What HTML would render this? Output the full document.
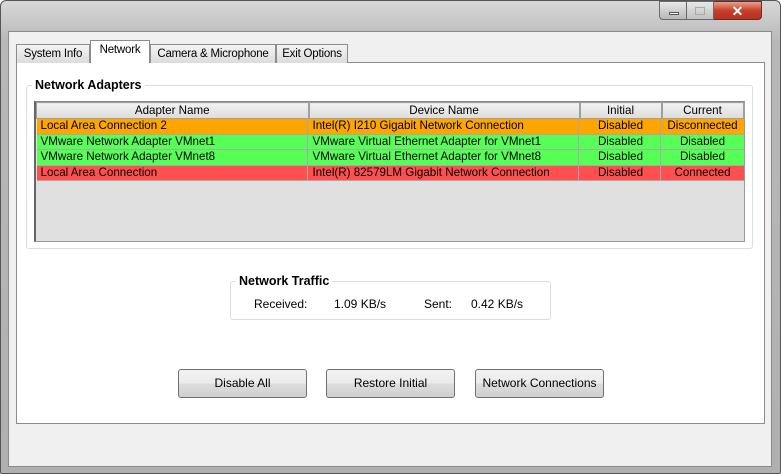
<!DOCTYPE html>
<html><head><style>
*{margin:0;padding:0;box-sizing:border-box}
body{width:781px;height:474px;overflow:hidden;background:#fff;font-family:"Liberation Sans",sans-serif;font-size:12px;color:#000;position:relative}
.abs{position:absolute}
.frame{left:0;top:0;width:781px;height:474px;background:linear-gradient(#d8d8d8,#b8b8b8 40px,#b0b0b0);border:1px solid #555;border-radius:6px 6px 2px 2px}
.client{left:8px;top:31px;width:764px;height:436px;background:#f0f0f0;border:1px solid #8a8a8a}
.tab{top:42px;height:21px;border:1px solid #8c8c8c;border-bottom:none;background:linear-gradient(#f4f4f4,#dcdcdc);padding:3px 0 0 0;text-align:center;font-size:11.5px;letter-spacing:-0.2px}
.page{left:16px;top:62px;width:749px;height:362px;background:#fff;border:1px solid #8c8c8c}
.grp{border:1px solid #d5dfe5;border-radius:3px}
.lbl{background:#fff;font-weight:bold;font-size:12.5px;padding:0 3px}
table{border-collapse:collapse;position:absolute;left:36px;top:102px;font-size:11.6px;table-layout:fixed;width:707px}
td{height:15.5px;padding:0 4px;line-height:14px;white-space:nowrap;overflow:hidden}
th{height:16px;font-weight:normal;background:linear-gradient(#f2f2f2,#dcdcdc);border:1px solid #a0a0a0;border-right:2px solid #a0a0a0;line-height:14px}
.btn{top:369px;width:129px;height:29px;border:1px solid #707070;border-radius:3px;background:linear-gradient(#f2f2f2 0,#ebebeb 50%,#dddddd 51%,#cfcfcf);text-align:center;line-height:27px;font-size:12px}
</style></head><body>
<div class="abs frame"></div>
<div class="abs" style="left:659px;top:1px;width:28px;height:19px;border:1px solid #6a6a6a;border-radius:0 0 0 4px;background:linear-gradient(#e8e8e8,#b8b8b8)"><div class="abs" style="left:9px;top:10px;width:10px;height:3px;background:#fff;border:1px solid #555"></div></div>
<div class="abs" style="left:687px;top:1px;width:27px;height:19px;border:1px solid #6a6a6a;border-left:none;background:linear-gradient(#e8e8e8,#c0c0c0)"><div class="abs" style="left:8px;top:5px;width:10px;height:8px;border:1px solid #aaa"></div></div>
<div class="abs" style="left:714px;top:1px;width:48px;height:19px;border:1px solid #6a2a2a;border-left:none;border-radius:0 0 4px 0;background:linear-gradient(#e8a090,#c8402a 50%,#b83020);color:#fff;font-weight:bold;text-align:center;font-size:14px;line-height:18px">✕</div>
<div class="abs client"></div>
<div class="abs page"></div>
<div class="abs tab" style="left:16px;width:74px;top:44px;height:19px">System Info</div>
<div class="abs tab" style="left:90px;width:60px;top:40px;height:23px;background:#fff;padding-top:3px">Network</div>
<div class="abs tab" style="left:150px;width:126px;top:44px;height:19px">Camera &amp; Microphone</div>
<div class="abs tab" style="left:276px;width:72px;top:44px;height:19px">Exit Options</div>
<div class="abs" style="left:91px;top:62px;width:58px;height:2px;background:#fff"></div>

<div class="abs grp" style="left:26px;top:85px;width:727px;height:164px"></div>
<div class="abs lbl" style="left:32px;top:78px">Network Adapters</div>
<div class="abs" style="left:34px;top:101px;width:711px;height:141px;background:#e0e0e0;border:1px solid #999;border-left:2px solid #666;border-top:1px solid #888"></div>
<table>
<colgroup><col style="width:272px"><col style="width:271px"><col style="width:82px"><col style="width:82px"></colgroup>
<tr><th>Adapter Name</th><th>Device Name</th><th>Initial</th><th>Current</th></tr>
<tr style="background:#ffa500"><td>Local Area Connection 2</td><td>Intel(R) I210 Gigabit Network Connection</td><td align="center">Disabled</td><td align="center">Disconnected</td></tr>
<tr style="background:#55ff55;border-top:1px solid #a8a8a8"><td>VMware Network Adapter VMnet1</td><td>VMware Virtual Ethernet Adapter for VMnet1</td><td align="center">Disabled</td><td align="center">Disabled</td></tr>
<tr style="background:#55ff55;border-top:1px solid #a8a8a8"><td>VMware Network Adapter VMnet8</td><td>VMware Virtual Ethernet Adapter for VMnet8</td><td align="center">Disabled</td><td align="center">Disabled</td></tr>
<tr style="background:#ff4f4f;border-top:1px solid #a8a8a8;border-bottom:1px solid #a8a8a8"><td>Local Area Connection</td><td>Intel(R) 82579LM Gigabit Network Connection</td><td align="center">Disabled</td><td align="center">Connected</td></tr>
</table>
<div class="abs" style="left:307px;top:118px;width:1px;height:62px;background:#a8a8a8"></div>
<div class="abs" style="left:578px;top:118px;width:1px;height:62px;background:#a8a8a8"></div>
<div class="abs" style="left:660px;top:118px;width:1px;height:62px;background:#a8a8a8"></div>

<div class="abs grp" style="left:230px;top:281px;width:321px;height:39px"></div>
<div class="abs lbl" style="left:236px;top:274px">Network Traffic</div>
<div class="abs" style="left:254px;top:297px">Received:</div>
<div class="abs" style="left:334px;top:297px">1.09 KB/s</div>
<div class="abs" style="left:424px;top:297px">Sent:</div>
<div class="abs" style="left:471px;top:297px">0.42 KB/s</div>

<div class="abs btn" style="left:178px">Disable All</div>
<div class="abs btn" style="left:326px">Restore Initial</div>
<div class="abs btn" style="left:475px">Network Connections</div>
</body></html>
